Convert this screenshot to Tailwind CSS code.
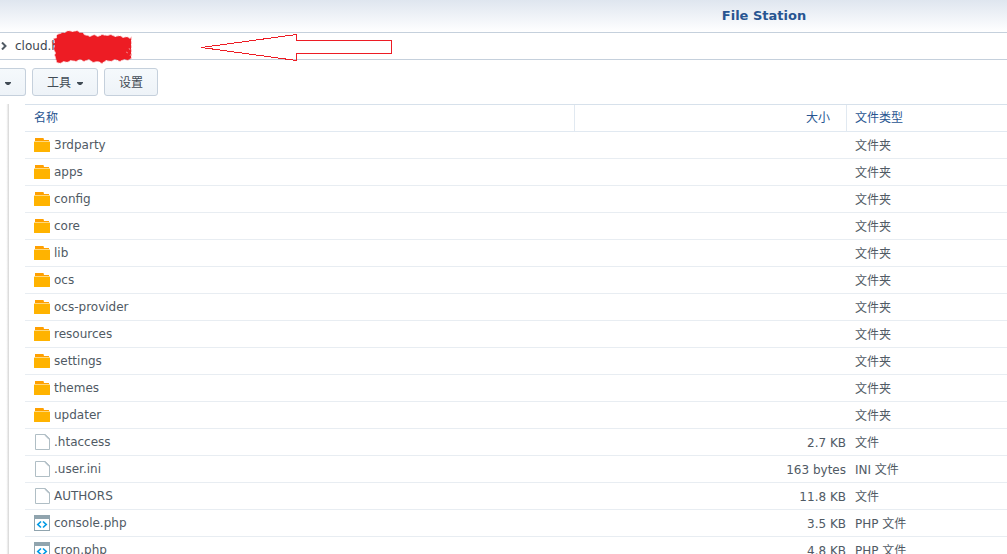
<!DOCTYPE html>
<html lang="zh-CN">
<head>
  <meta charset="UTF-8" />
  <title>File Station</title>
  <script src="https://cdn.jsdelivr.net/npm/@tailwindcss/browser@4"></script>
</head>
<body class="bg-white text-[#505a64] text-xs font-['DejaVu_Sans','Noto_Sans_CJK_SC',sans-serif] h-screen overflow-hidden flex flex-col">

  <!-- icons -->
  <svg class="hidden">
    <symbol id="icon-folder" viewBox="0 0 16 16">
      <path d="M1 1h8.5l0.5 2h5v1H1z" fill="#ffa000" />
      <rect x="0" y="4.5" width="16" height="10.5" rx="0.6" fill="#ffb300" />
    </symbol>
    <symbol id="icon-file" viewBox="0 0 16 16">
      <path d="M1.5 0.5h9.5l4.5 4.5v10.5h-14z" fill="#fff" stroke="#b0bec5" />
      <path d="M10.5 0.5l1 1.5 3 3 1 0.5v-1L11.5 0.5z" fill="#b0bec5" stroke="#b0bec5" stroke-width="0.6" />
    </symbol>
    <symbol id="icon-code" viewBox="0 0 16 16">
      <rect x="0.5" y="0.5" width="15" height="15" fill="#fff" stroke="#90a4ae" />
      <rect x="0" y="0" width="16" height="4" fill="#90a4ae" />
      <path d="M7 6.5L3.8 9.5 7 12.5M9 6.5l3.2 3-3.2 3" fill="none" stroke="#039be5" stroke-width="1.7" />
    </symbol>
  </svg>

  <header class="h-[33px] shrink-0 flex justify-center pl-[521px] bg-linear-to-b from-[#dfe6ef] to-white border-b border-[#c5d0dc]">
    <h1 class="text-[13px] leading-8 font-bold text-[#285591]">File Station</h1>
  </header>

  <nav class="relative h-[27px] shrink-0 flex items-center border-b border-[#c5d0dc]">
    <svg class="w-2 h-2 mr-[7px]" viewBox="0 0 8 8"><path d="M2 0.5L5.5 4 2 7.5" fill="none" stroke="#505a64" stroke-width="2" /></svg>
    <a href="#" class="leading-6 text-[#3c4650]">cloud.h</a>

    <!-- hand-drawn marks over the path -->
    <svg class="absolute left-[47px] -top-[3px] w-[90px] h-9" viewBox="50 29 90 36">
      <path d="M58 43l0-2-1-3 3-1 0-3 3-1 2-1 3 0 3-2 5 1 4-1 3 2 3 0 1 2 4 1 2 1 4-2 4 2 4-2 5 1 4-1 4 2 5-1 3 2 4-1 3 2 1-1v20l-3 2-4-1-4 2-5-2-4 2-5-1-4 3-4-2-5 1-4-3-5 2-4-2-4 2-5-1-4 2-3-1-4 2-3-1-1-4-1-3 1-2-2-4 1-3-2-3z" fill="#ed1c24" stroke="#ed1c24" stroke-opacity="0.35" stroke-width="1.5" stroke-dasharray="3 1" />
      <path d="M129 51l2 1M132 47l1 2M133 55l1-2" stroke="#f27a7f" fill="none" />
    </svg>
    <svg class="absolute left-[200px] top-0 w-[200px] h-7" viewBox="200 33 200 28">
      <path d="M201.5 47.5L296.5 34.5V40.5H391.5V53.5H296.5V60.5z" fill="none" stroke="#ed1c24" shape-rendering="crispEdges" />
    </svg>
  </nav>

  <div class="shrink-0 flex gap-1.5 pt-2 pb-2">
    <button aria-label="更多" class="h-7 w-[26px] flex items-center pl-[5px] rounded-r-[3px] border border-l-0 border-[#c5d0dc] bg-linear-to-b from-[#f5f9fc] to-[#eef3f8]">
      <svg class="w-1.5 h-[3px] mt-[3px]" viewBox="0 0 6 3"><path d="M0 0h6v1L4 3H2L0 1z" fill="#414b55" /></svg>
    </button>
    <button class="h-7 w-[66px] flex items-center justify-center gap-1.5 rounded-[3px] border border-[#c5d0dc] bg-linear-to-b from-[#f5f9fc] to-[#eef3f8] text-[#414b55]">
      <span class="pt-0.5">工具</span>
      <svg class="w-1.5 h-[3px] mt-[3px]" viewBox="0 0 6 3"><path d="M0 0h6v1L4 3H2L0 1z" fill="#414b55" /></svg>
    </button>
    <button class="h-7 w-[54px] pt-0.5 rounded-[3px] border border-[#c5d0dc] bg-linear-to-b from-[#f5f9fc] to-[#eef3f8] text-[#414b55]">设置</button>
  </div>

  <main class="flex-1 min-h-0 flex">
    <div class="w-[9px] mr-4 shrink-0 bg-linear-to-r from-white from-70% to-[#d5d5d5]"></div>
    <div class="flex-1 min-w-0 overflow-hidden">
      <table class="w-full table-fixed border-separate border-spacing-0 border-t border-[#d7e1eb]">
        <colgroup>
          <col class="w-[550px]" />
          <col class="w-[271px]" />
          <col />
        </colgroup>
        <thead class="text-[#285591]">
          <tr>
            <th class="h-[27px] p-0 pl-[9px] text-left font-normal border-b border-r border-[#e1e9f1]">名称</th>
            <th class="h-[27px] p-0 pr-4 text-right font-normal border-b border-[#e1e9f1]">大小</th>
            <th class="h-[27px] p-0 pl-2 text-left font-normal border-b border-l border-[#e1e9f1]">文件类型</th>
          </tr>
        </thead>
        <tbody id="file-list"></tbody>
      </table>
    </div>
  </main>

  <script>
    const files = [
      ['folder', '3rdparty', '', '文件夹'],
      ['folder', 'apps', '', '文件夹'],
      ['folder', 'config', '', '文件夹'],
      ['folder', 'core', '', '文件夹'],
      ['folder', 'lib', '', '文件夹'],
      ['folder', 'ocs', '', '文件夹'],
      ['folder', 'ocs-provider', '', '文件夹'],
      ['folder', 'resources', '', '文件夹'],
      ['folder', 'settings', '', '文件夹'],
      ['folder', 'themes', '', '文件夹'],
      ['folder', 'updater', '', '文件夹'],
      ['file', '.htaccess', '2.7 KB', '文件'],
      ['file', '.user.ini', '163 bytes', 'INI 文件'],
      ['file', 'AUTHORS', '11.8 KB', '文件'],
      ['code', 'console.php', '3.5 KB', 'PHP 文件'],
      ['code', 'cron.php', '4.8 KB', 'PHP 文件'],
    ];

    document.getElementById('file-list').innerHTML = files.map(([icon, name, size, type]) => `
      <tr>
        <td class="h-[27px] p-0 pl-[9px] border-b border-[#e8edf2]">
          <div class="flex items-center gap-1 leading-6">
            <svg class="w-4 h-4"><use href="#icon-${icon}" /></svg>
            <span>${name}</span>
          </div>
        </td>
        <td class="h-[27px] p-0 pt-0.5 text-right border-b border-[#e8edf2]">${size}</td>
        <td class="h-[27px] p-0 pt-0.5 pl-[9px] border-b border-[#e8edf2]">${type}</td>
      </tr>`).join('');
  </script>
</body>
</html>
